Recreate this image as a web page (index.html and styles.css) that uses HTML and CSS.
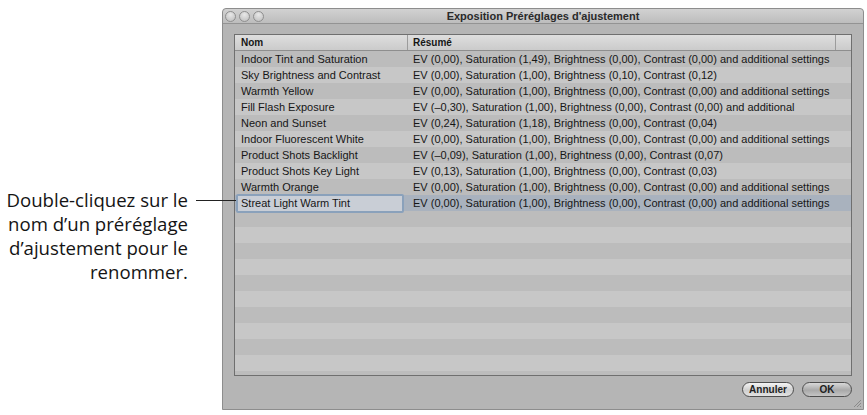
FILE: index.html
```html
<!DOCTYPE html>
<html lang="fr">
<head>
  <meta charset="UTF-8">
  <title>Exposition Préréglages d'ajustement</title>
  <link rel="stylesheet" href="styles.css">
</head>
<body>
  <div class="page">
    <!-- Légende à gauche de la fenêtre -->
    <p class="callout">
      Double-cliquez sur le<br>
      nom d’un préréglage<br>
      d’ajustement pour le<br>
      renommer.
      <span class="leader"></span>
    </p>

    <div class="window">
      <div class="titlebar">
        <span class="light"></span>
        <span class="light"></span>
        <span class="light"></span>
        <span class="title">Exposition Préréglages d'ajustement</span>
      </div>

      <div class="content">
        <div class="table">
          <div class="thead">
            <span class="th">Nom</span>
            <span class="th">Résumé</span>
            <span class="th corner"></span>
          </div>
          <div class="tbody" id="rows"></div>
        </div>

        <div class="buttons">
          <button class="btn">Annuler</button>
          <button class="btn default">OK</button>
        </div>
      </div>

      <svg class="grip" width="10" height="10" viewBox="0 0 10 10">
        <path d="M9 2 L2 9 M9 5 L5 9 M9 8 L8 9" stroke="#8a8a8a" stroke-width="1"/>
      </svg>
    </div>
  </div>

  <script>
    // Liste des préréglages
    const presets = [
      ['Indoor Tint and Saturation', 'EV (0,00), Saturation (1,49), Brightness (0,00), Contrast (0,00) and additional settings'],
      ['Sky Brightness and Contrast', 'EV (0,00), Saturation (1,00), Brightness (0,10), Contrast (0,12)'],
      ['Warmth Yellow', 'EV (0,00), Saturation (1,00), Brightness (0,00), Contrast (0,00) and additional settings'],
      ['Fill Flash Exposure', 'EV (\u20130,30), Saturation (1,00), Brightness (0,00), Contrast (0,00) and additional'],
      ['Neon and Sunset', 'EV (0,24), Saturation (1,18), Brightness (0,00), Contrast (0,04)'],
      ['Indoor Fluorescent White', 'EV (0,00), Saturation (1,00), Brightness (0,00), Contrast (0,00) and additional settings'],
      ['Product Shots Backlight', 'EV (\u20130,09), Saturation (1,00), Brightness (0,00), Contrast (0,07)'],
      ['Product Shots Key Light', 'EV (0,13), Saturation (1,00), Brightness (0,00), Contrast (0,03)'],
      ['Warmth Orange', 'EV (0,00), Saturation (1,00), Brightness (0,00), Contrast (0,00) and additional settings'],
      ['Streat Light Warm Tint', 'EV (0,00), Saturation (1,00), Brightness (0,00), Contrast (0,00) and additional settings']
    ];
    const editing = 9;
    const totalRows = 21;

    const tbody = document.getElementById('rows');
    for (let i = 0; i < totalRows; i++) {
      const row = document.createElement('div');
      row.className = 'row' + (i % 2 ? ' odd' : '') + (i === editing ? ' selected' : '');
      const p = presets[i];
      if (p) {
        const name = i === editing
          ? `<span class="editor">${p[0]}</span>`
          : p[0];
        row.innerHTML = `<span class="td name">${name}</span><span class="td">${p[1]}</span>`;
      }
      tbody.appendChild(row);
    }
  </script>
</body>
</html>
```

FILE: styles.css
```css
body {
  margin: 0;
  background: #fff;
  font-family: "Liberation Sans", Arial, sans-serif;
}
.page {
  display: flex;
  align-items: flex-start;
  padding-top: 8px;
}

/* Légende */
.callout {
  position: relative;
  width: 188px;
  margin: 180px 0 0;
  text-align: right;
  font-family: "Open Sans", sans-serif;
  font-size: 18.6px;
  line-height: 24px;
  color: #141414;
}
.leader {
  position: absolute;
  left: 196px;
  top: 12px;
  width: 40px;
  height: 1px;
  background: #222;
  z-index: 2;
}

/* Fenêtre */
.window {
  position: relative;
  width: 642px;
  height: 402px;
  box-sizing: border-box;
  margin-left: 34px;
  border: 1px solid #8d8d8d;
  border-radius: 4px 4px 0 0;
  background: #b5b5b5;
}
.titlebar {
  position: relative;
  height: 14px;
  display: flex;
  align-items: center;
  gap: 3px;
  padding-left: 2px;
  border-bottom: 1px solid #939393;
  border-radius: 4px 4px 0 0;
  background: linear-gradient(#d2d2d2, #bdbdbd);
}
.light {
  width: 9px;
  height: 9px;
  border-radius: 50%;
  border: 1px solid #8f8f8f;
  background: radial-gradient(circle at 50% 30%, #e8e8e8, #bcbcbc);
}
.title {
  position: absolute;
  left: 0;
  right: 0;
  text-align: center;
  font-size: 11px;
  font-weight: bold;
  color: #2a2a2a;
}
.content {
  padding: 10px 11px 0;
}

/* Tableau */
.table {
  height: 342px;
  box-sizing: border-box;
  border: 1px solid #6f6f6f;
  background: #bababa;
  overflow: hidden;
  font-size: 11px;
  color: #161616;
}
.thead {
  display: grid;
  grid-template-columns: 173px 428px 1fr;
  height: 15px;
  border-bottom: 1px solid #8e8e8e;
  background: linear-gradient(#dedede, #cbcbcb);
}
.th {
  padding-left: 6px;
  line-height: 15px;
  font-size: 10px;
  font-weight: bold;
  border-right: 1px solid #9c9c9c;
}
.th + .th {
  padding-left: 5px;
}
.th.corner {
  border-right: 0;
}
.row {
  display: grid;
  grid-template-columns: 173px 1fr;
  height: 16px;
  line-height: 16px;
  background: #bcbcbc;
  white-space: nowrap;
}
.row.odd {
  background: #c7c7c7;
}
.row.selected {
  background: #a9b2be;
}
.td {
  padding-left: 5px;
}
.td.name {
  padding-left: 6px;
}
.row.selected .td.name {
  padding: 0 4px 0 1px;
}
.editor {
  position: relative;
  z-index: 1;
  display: block;
  height: 15px;
  margin-top: -1px;
  padding-left: 3px;
  line-height: 15px;
  border: 2px solid #8aa1bb;
  border-radius: 2px;
  background: #c9ced6;
}

/* Boutons */
.buttons {
  display: flex;
  justify-content: flex-end;
  gap: 8px;
  margin-top: 6px;
}
.btn {
  height: 15px;
  padding: 0;
  border: 1px solid #4e4e4e;
  border-radius: 8px;
  font-family: "Liberation Sans", Arial, sans-serif;
  font-size: 10px;
  font-weight: bold;
  line-height: 13px;
  color: #1e1e1e;
  background: linear-gradient(#f4f4f4, #cfcfcf 55%, #e2e2e2);
  width: 52px;
}
.btn.default {
  width: 50px;
  background: linear-gradient(#d8d8d8, #a9a9a9 55%, #c4c4c4);
}
.grip {
  position: absolute;
  right: 1px;
  bottom: 1px;
}
```
